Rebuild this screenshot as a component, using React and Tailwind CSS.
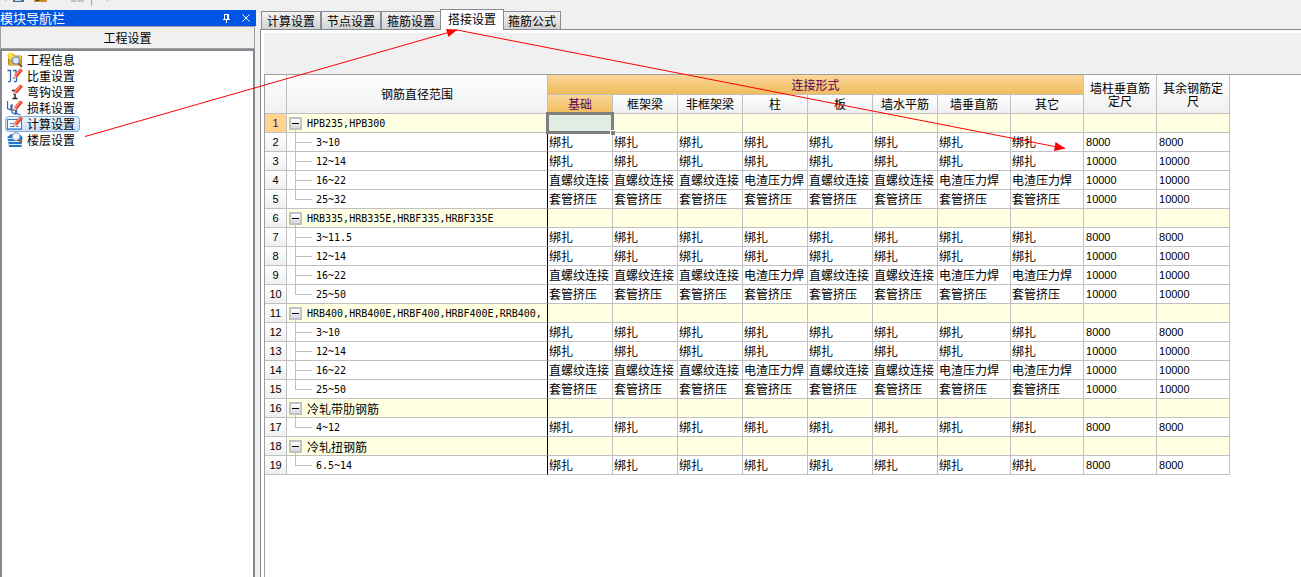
import { useState } from "react";

const CJK = "font-['Noto_Sans_CJK_SC',sans-serif]";
const HEADS = ["基础", "框架梁", "非框架梁", "柱", "板", "墙水平筋", "墙垂直筋", "其它"];

const TIE = Array(8).fill("绑扎");
const SLEEVE = Array(8).fill("套管挤压");
const THREAD = [
  "直螺纹连接",
  "直螺纹连接",
  "直螺纹连接",
  "电渣压力焊",
  "直螺纹连接",
  "直螺纹连接",
  "电渣压力焊",
  "电渣压力焊",
];

const GROUPS = [
  {
    name: "HPB235,HPB300",
    rows: [
      ["3~10", TIE, "8000"],
      ["12~14", TIE, "10000"],
      ["16~22", THREAD, "10000"],
      ["25~32", SLEEVE, "10000"],
    ],
  },
  {
    name: "HRB335,HRB335E,HRBF335,HRBF335E",
    rows: [
      ["3~11.5", TIE, "8000"],
      ["12~14", TIE, "10000"],
      ["16~22", THREAD, "10000"],
      ["25~50", SLEEVE, "10000"],
    ],
  },
  {
    name: "HRB400,HRB400E,HRBF400,HRBF400E,RRB400,",
    rows: [
      ["3~10", TIE, "8000"],
      ["12~14", TIE, "10000"],
      ["16~22", THREAD, "10000"],
      ["25~50", SLEEVE, "10000"],
    ],
  },
  { name: "冷轧带肋钢筋", cjk: true, rows: [["4~12", TIE, "8000"]] },
  { name: "冷轧扭钢筋", cjk: true, rows: [["6.5~14", TIE, "8000"]] },
];

const LINES = [];
GROUPS.forEach((g) => {
  LINES.push({ group: true, name: g.name, cjk: g.cjk });
  g.rows.forEach(([name, joints, length], i) =>
    LINES.push({ name, joints, length, last: i === g.rows.length - 1 })
  );
});

function Pencil() {
  return (
    <g>
      <path d="M13 0.2 L16 2.6 L10 9.6 L7 7.2 Z" fill="#e8402f" />
      <path d="M13 0.8 L14.300 1.9 L8.5 8.4 L7.2 7.3 Z" fill="#ff8068" />
      <path d="M7 7.2 L10 9.6 L6 11 Z" fill="#e9b48c" />
      <path d="M6.5 9.4 L7.8 10.4 L6 11 Z" fill="#503030" />
    </g>
  );
}

function InfoIcon() {
  return (
    <>
      <path d="M1.5 2.5 h5 l1.5 1.5 h6.5 v9 h-13 Z" fill="#f6d468" stroke="#b98a1c" />
      <path d="M2 7 h12 v5.5 h-12 Z" fill="#e0aa3c" />
      <path d="M3.5 0 v7 M0 3.5 h7 M1 1 l5 5 M6 1 l-5 5" stroke="#ffe04a" strokeWidth="1.2" />
      <circle cx="9" cy="8.5" r="3.5" fill="#dcedfd" stroke="#6d89b4" strokeWidth="1.2" />
      <path d="M11.5 11.5 L15 15" stroke="#9a5a1c" strokeWidth="2" />
    </>
  );
}

function WeightIcon() {
  return (
    <>
      <path
        d="M0.5 2.5 h3 v10 q0 1.5 -2.5 1 M6 2.5 h3 v5 M9.500 9 v3.5 q0 1.5 -2.5 1"
        fill="none"
        stroke="#2f62b4"
        strokeWidth="1.3"
      />
      <Pencil />
    </>
  );
}

function HookIcon() {
  return (
    <>
      <path d="M5 6.5 h3 v8 M5.5 14.5 h5" fill="none" stroke="#222" strokeWidth="1.5" />
      <Pencil />
    </>
  );
}

function LossIcon() {
  return (
    <>
      <path
        d="M0.5 1 v7.5 l3.500 1.500 v-5 M5 4 v8.5 l3.5 1.5 v-4 M9.500 9 v4.500 l4 1.500"
        fill="none"
        stroke="#2f62b4"
        strokeWidth="1.2"
      />
      <Pencil />
    </>
  );
}

function CalcIcon() {
  return (
    <>
      <rect x="0.5" y="3.5" width="14" height="10" fill="#f4faff" stroke="#3c78c8" />
      <path d="M1 13 h13" stroke="#5a94dc" strokeWidth="1.5" />
      <path d="M3 7.500 h4 M3 10.500 h3 M9 10.500 h3" stroke="#5a88c4" />
      <Pencil />
    </>
  );
}

function FloorIcon() {
  return (
    <>
      <path d="M0.5 5 L4 2 H12 L15.5 5 L14.5 15 H2 Z" fill="#2276cc" />
      <path d="M1 6.5 h9 M1 9.5 h13 M2 12.5 h13" stroke="#d4ebff" strokeWidth="1.2" />
      <circle cx="9" cy="4.5" r="3.8" fill="#eef7ff" stroke="#90a4ba" strokeWidth="1.2" />
      <path d="M11.5 7.5 L14.5 10.5" stroke="#a8642a" strokeWidth="2" />
    </>
  );
}

const NAV = [
  ["工程信息", InfoIcon],
  ["比重设置", WeightIcon],
  ["弯钩设置", HookIcon],
  ["损耗设置", LossIcon],
  ["计算设置", CalcIcon],
  ["楼层设置", FloorIcon],
];

const TABS = ["计算设置", "节点设置", "箍筋设置", "搭接设置", "箍筋公式"];

function Toolbar() {
  return (
    <svg className="block h-[10px] w-[120px]" viewBox="0 0 120 10" aria-hidden="true">
      <path d="M5.500 0 v1" stroke="#b0b0b0" />
      <rect x="13" y="0" width="11" height="2" fill="#4a6f96" />
      <rect x="15" y="0" width="6" height="1" fill="#c9def0" />
      <path d="M34 0 h13 v1 l-1 1 h-12 Z" fill="#c88a24" />
      <rect x="36" y="0" width="3" height="1" fill="#463314" />
      <rect x="71" y="0" width="13" height="2" fill="#c4c4c4" />
      <rect x="76" y="0" width="2" height="1" fill="#eeeeee" />
      <path d="M91.500 0 v6" stroke="#a5a5a5" />
      <path d="M106 0.500 h2" stroke="#cccccc" />
    </svg>
  );
}

function Sidebar({ active, onSelect }) {
  return (
    <aside className="flex min-h-0 w-64 flex-1 flex-col">
      <header className="flex h-4 items-center justify-between bg-[#0055e5] text-white">
        <h1 className="text-[13px] leading-4">模块导航栏</h1>
        <div className="flex items-center gap-2 pr-1">
          <button type="button" aria-label="固定" className="h-3 w-3">
            <svg viewBox="0 0 12 12" className="block h-3 w-3" fill="none" stroke="white" shapeRendering="crispEdges">
              <path d="M4.500 2 v5 M8.500 2 v5 M4 2.500 h5 M3 7.500 h7 M6.500 8 v3 M7.500 2 v5" />
            </svg>
          </button>
          <button type="button" aria-label="关闭" className="h-3 w-3">
            <svg viewBox="0 0 12 12" className="block h-3 w-3" stroke="white">
              <path d="M2.500 2.500 L9.500 9.500 M9.500 2.500 L2.500 9.500" />
            </svg>
          </button>
        </div>
      </header>
      <h2 className="mr-px flex h-[23px] items-center justify-center border border-[#a0a0a0] bg-[#f0f0f0]">
        工程设置
      </h2>
      <nav className="mr-px flex-1 border-2 border-b-0 border-[#828790] bg-white pl-[3px] pt-px">
        {NAV.map(([label, Icon]) => (
          <button
            key={label}
            type="button"
            onClick={() => onSelect(label)}
            className={
              "flex h-4 w-[75px] items-center gap-1 rounded-sm pl-0.5 text-left leading-4 " +
              (active === label
                ? "bg-gradient-to-b from-[#eaf4fd] to-[#c4def8] outline outline-1 -outline-offset-1 outline-[#84acdd]"
                : "")
            }
          >
            <svg viewBox="0 0 16 16" className="h-4 w-4 shrink-0" aria-hidden="true">
              <Icon />
            </svg>
            <span className="whitespace-nowrap">{label}</span>
          </button>
        ))}
      </nav>
    </aside>
  );
}

function Tabs({ active, onSelect }) {
  return (
    <div role="tablist" className="flex h-5 items-end pl-px">
      {TABS.map((label) => (
        <button
          key={label}
          type="button"
          role="tab"
          aria-selected={active === label}
          onClick={() => onSelect(label)}
          className={
            "flex justify-center border border-b-0 border-[#898c95] leading-4 " +
            (active === label
              ? "-mx-px z-10 -mb-px h-[21px] w-16 bg-white pt-px"
              : "h-[18px] w-[60px] bg-gradient-to-b from-[#f3f3f3] to-[#d2d2d2] pt-px last:w-[58px]")
          }
        >
          {label}
        </button>
      ))}
    </div>
  );
}

const PLAIN_HEAD = "border-b border-r border-[#c0c0c0] bg-gradient-to-b from-white to-[#f0f0f0] p-0 font-normal ";
const HOT_HEAD = "border-b border-r border-[#c0c0c0] bg-gradient-to-b from-[#fad698] to-[#f0bd5c] p-0 font-normal text-[#5a0058] ";

function TreeCell({ line }) {
  if (line.group) {
    return (
      <div className="flex h-[18px] items-center gap-1 pl-0.5">
        <div className="flex h-full w-[14px] flex-col justify-end">
          <button
            type="button"
            aria-label={line.name}
            className="flex h-[13px] w-[13px] items-center justify-center border-2 border-[#c0c0c8] bg-gradient-to-b from-white to-[#d4d8e0]"
          >
            <span className="h-px w-[7px] bg-black" />
          </button>
          <span className="ml-1.5 h-0.5 w-px bg-[#c0c0c0]" />
        </div>
        <span
          className={
            "whitespace-nowrap pt-0.5 leading-4 " +
            (line.cjk ? "text-xs" : "font-['DejaVu_Sans_Mono',monospace] text-[10px]")
          }
        >
          {line.name}
        </span>
      </div>
    );
  }
  return (
    <div className="flex h-[18px] items-center gap-1 pl-2">
      <div className="flex h-full w-[17px] flex-col">
        <span className="h-[10px] border-b border-l border-[#c0c0c0]" />
        {!line.last && <span className="flex-1 border-l border-[#c0c0c0]" />}
      </div>
      <span className="pt-0.5 font-['DejaVu_Sans_Mono',monospace] text-[10px] leading-4">{line.name}</span>
    </div>
  );
}

function JointTable() {
  return (
    <table className="w-[965px] table-fixed border-separate border-spacing-0 text-xs leading-4">
      <colgroup>
        <col className="w-[22px]" />
        <col className="w-[261px]" />
        {HEADS.map((h, i) => (
          <col key={h} className={i < 6 ? "w-[65px]" : "w-[73px]"} />
        ))}
        <col className="w-[73px]" />
        <col className="w-[73px]" />
      </colgroup>
      <thead>
        <tr className="h-5">
          <th rowSpan={2} className={PLAIN_HEAD} aria-label="序号" />
          <th rowSpan={2} className={PLAIN_HEAD}>钢筋直径范围</th>
          <th colSpan={8} className={HOT_HEAD}>连接形式</th>
          <th rowSpan={2} className={PLAIN_HEAD + "leading-[13px]"}>墙柱垂直筋<br />定尺</th>
          <th rowSpan={2} className={PLAIN_HEAD + "leading-[13px]"}>其余钢筋定<br />尺</th>
        </tr>
        <tr className="h-[19px]">
          {HEADS.map((h, i) => (
            <th key={h} className={i === 0 ? HOT_HEAD : PLAIN_HEAD}>{h}</th>
          ))}
        </tr>
      </thead>
      <tbody>
        {LINES.map((line, i) => {
          const cell = "border-b border-r border-[#c0c0c0] py-0 pr-0 " + (line.group ? "bg-[#ffffe1] " : "bg-white ");
          return (
            <tr key={i} className="h-[19px]">
              <th
                scope="row"
                className={
                  "border-b border-r border-[#c0c0c0] p-0 font-['Liberation_Sans',sans-serif] text-[11px] font-normal " +
                  (i === 0 ? "bg-[#ffd48c] text-[#5a0058]" : "bg-gradient-to-b from-white to-[#f0f0f0]")
                }
              >
                {i + 1}
              </th>
              <td className={"border-b border-r border-b-[#c0c0c0] border-r-black p-0 " + (line.group ? "bg-[#ffffe1]" : "bg-white")}>
                <TreeCell line={line} />
              </td>
              {HEADS.map((h, j) =>
                i === 0 && j === 0 ? (
                  <td key={h} className="relative border-b border-r border-[#c0c0c0] bg-[#e0eee4] p-0">
                    <div className="absolute -inset-0.5 z-10 border-[3px] border-[#808080]">
                      <span className="absolute -bottom-1 -right-1 h-[5px] w-[5px] border-l border-t border-white bg-[#808080]" />
                    </div>
                  </td>
                ) : (
                  <td key={h} className={cell + "whitespace-nowrap pl-px"}>{line.joints?.[j]}</td>
                )
              )}
              <td className={cell + "pl-0.5 font-['Liberation_Sans',sans-serif] text-[11px]"}>{line.length}</td>
              <td className={cell + "pl-0.5 font-['Liberation_Sans',sans-serif] text-[11px]"}>{line.length}</td>
            </tr>
          );
        })}
      </tbody>
    </table>
  );
}

export default function App() {
  const [nav, setNav] = useState("计算设置");
  const [tab, setTab] = useState("搭接设置");
  return (
    <div className={"relative flex h-screen flex-col overflow-hidden bg-[#f0f0f0] text-xs text-black " + CJK}>
      <div className="flex min-h-0 flex-1">
        <div className="flex shrink-0 flex-col">
          <Toolbar />
          <Sidebar active={nav} onSelect={setNav} />
        </div>
        <main className="ml-1 flex min-w-0 flex-1 flex-col pt-[9px]">
          <Tabs active={tab} onSelect={setTab} />
          <section className="flex min-h-0 flex-1 flex-col border-l border-t border-[#828790] bg-white pl-[3px] pt-[3px]">
            <div className="h-[41px] shrink-0 bg-[#f0f0f0]" />
            <div className="min-h-0 flex-1 border-l border-t border-[#a0a0a0] bg-white">
              <JointTable />
            </div>
          </section>
        </main>
      </div>
      <svg
        className="pointer-events-none absolute left-0 top-0 z-20 h-[160px] w-[1080px]"
        viewBox="0 0 1080 160"
        aria-hidden="true"
      >
        <path d="M85 136.500 L457 30 L1065 148.500" fill="none" stroke="#ff0000" />
        <path d="M457.500 29.500 L446 29 L448.500 37 Z" fill="#ff0000" />
        <path d="M1065.500 148.500 L1055.500 142 L1054 151 Z" fill="#ff0000" />
      </svg>
    </div>
  );
}
